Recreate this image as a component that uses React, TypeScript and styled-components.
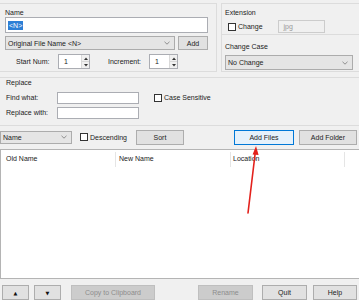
import React from "react";
import styled, { createGlobalStyle, css } from "styled-components";

const GlobalStyle = createGlobalStyle`
  html, body { margin: 0; padding: 0; background: #f0f0f0; }
  * { box-sizing: border-box; }
`;

const Window = styled.div`
  position: relative;
  width: 359px;
  height: 300px;
  overflow: hidden;
  background: #f0f0f0;
  font-family: "Liberation Sans", Arial, sans-serif;
  font-size: 7px;
  color: #222;
  display: flex;
  flex-direction: column;
`;

const TopRow = styled.div`
  display: flex;
  gap: 4px;
  padding-top: 3px;
`;

const Group = styled.div<{ $w?: number; $h: number; $edge?: boolean }>`
  width: ${({ $w }) => ($w ? `${$w}px` : "auto")};
  height: ${({ $h }) => $h}px;
  border: 1px solid #dcdcdc;
  ${({ $edge }) =>
    $edge &&
    css`
      border-left: none;
    `}
  display: flex;
  flex-direction: column;
`;

const NameGroup = styled(Group)`
  padding: 4px 0 0 5px;
`;

const RightColumn = styled.div`
  flex: 1;
  display: flex;
  flex-direction: column;
`;

const ExtGroup = styled(Group)`
  padding: 4px 0 0 3px;
  border-right: none;
`;

const CaseGroup = styled(Group)`
  margin-top: -1px;
  padding: 7px 0 0 3px;
  border-right: none;
`;

const ReplaceGroup = styled(Group)`
  margin-top: 5px;
  padding: 0 0 0 6px;
  border-right: none;
`;

const Caption = styled.div<{ $h?: number }>`
  height: ${({ $h }) => $h ?? 9}px;
  line-height: ${({ $h }) => $h ?? 9}px;
  white-space: nowrap;
`;

const Row = styled.div<{ $mt?: number; $h: number; $gap?: number }>`
  display: flex;
  align-items: center;
  margin-top: ${({ $mt }) => $mt ?? 0}px;
  height: ${({ $h }) => $h}px;
  gap: ${({ $gap }) => $gap ?? 0}px;
`;

const Label = styled.span<{ $w?: number; $ml?: number }>`
  display: inline-block;
  width: ${({ $w }) => ($w ? `${$w}px` : "auto")};
  margin-left: ${({ $ml }) => $ml ?? 0}px;
  white-space: nowrap;
`;

const TextBox = styled.div<{ $w: number; $h: number; $ml?: number; $disabled?: boolean }>`
  width: ${({ $w }) => $w}px;
  height: ${({ $h }) => $h}px;
  margin-left: ${({ $ml }) => $ml ?? 0}px;
  background: ${({ $disabled }) => ($disabled ? "#f0f0f0" : "#fff")};
  border: 1px solid ${({ $disabled }) => ($disabled ? "#cccccc" : "#abadb3")};
  color: ${({ $disabled }) => ($disabled ? "#9a9a9a" : "#222")};
  display: flex;
  align-items: center;
  padding-left: ${({ $disabled }) => ($disabled ? 5 : 2)}px;
  flex-shrink: 0;
`;

const Selected = styled.span`
  background: #2d7fd6;
  color: #fff;
  line-height: 9px;
  padding: 0 1px;
`;

const Combo = styled.div<{ $w: number; $h: number; $ml?: number }>`
  width: ${({ $w }) => $w}px;
  height: ${({ $h }) => $h}px;
  margin-left: ${({ $ml }) => $ml ?? 0}px;
  background: #e5e5e5;
  border: 1px solid #acacac;
  display: flex;
  align-items: center;
  justify-content: space-between;
  padding: 0 4px 0 2px;
  flex-shrink: 0;
  white-space: nowrap;
`;

const Button = styled.div<{
  $w: number;
  $h?: number;
  $ml?: number;
  $variant?: "default" | "focus" | "disabled";
}>`
  width: ${({ $w }) => $w}px;
  height: ${({ $h }) => $h ?? 15}px;
  margin-left: ${({ $ml }) => $ml ?? 0}px;
  flex-shrink: 0;
  display: flex;
  align-items: center;
  justify-content: center;
  background: #e1e1e1;
  border: 1px solid #adadad;
  white-space: nowrap;
  ${({ $variant }) =>
    $variant === "focus" &&
    css`
      background: #e5f1fb;
      border-color: #0078d7;
    `}
  ${({ $variant }) =>
    $variant === "disabled" &&
    css`
      background: #cccccc;
      border-color: #bfbfbf;
      color: #8d8d8d;
    `}
`;

const Check = styled.span<{ $ml?: number }>`
  width: 8px;
  height: 8px;
  margin-left: ${({ $ml }) => $ml ?? 0}px;
  margin-right: 2px;
  border: 1px solid #333;
  background: #fff;
  flex-shrink: 0;
`;

const Spin = styled.div<{ $w: number }>`
  width: ${({ $w }) => $w}px;
  height: 15px;
  border: 1px solid #abadb3;
  background: #fff;
  display: flex;
  flex-shrink: 0;
`;

const SpinValue = styled.div`
  flex: 1;
  padding-left: 5px;
  display: flex;
  align-items: center;
`;

const SpinButtons = styled.div`
  width: 8px;
  display: flex;
  flex-direction: column;
  border-left: 1px solid #d9d9d9;
`;

const SpinHalf = styled.div`
  flex: 1;
  display: flex;
  align-items: center;
  justify-content: center;
  background: #f0f0f0;
  & + & {
    border-top: 1px solid #d9d9d9;
  }
`;

const SortRow = styled.div`
  display: flex;
  align-items: center;
  height: 15px;
  margin-top: 4px;
`;

const ListView = styled.div`
  margin-top: 4px;
  height: 133px;
  background: #fff;
  border: 1px solid #b4b4b4;
  border-right: none;
`;

const ListHeader = styled.div`
  display: flex;
  height: 17px;
  align-items: flex-end;
`;

const HeaderCell = styled.div<{ $w: number; $pl: number }>`
  width: ${({ $w }) => $w}px;
  height: 15px;
  padding-left: ${({ $pl }) => $pl}px;
  border-right: 1px solid #e5e5e5;
  display: flex;
  align-items: center;
  padding-bottom: 2px;
  white-space: nowrap;
`;

const BottomBar = styled.div`
  display: flex;
  align-items: flex-start;
  padding: 6px 0 0 2px;
`;

const Tri = styled.span`
  font-family: "DejaVu Sans", sans-serif;
  font-size: 5px;
  color: #111;
`;

const ArrowLayer = styled.svg`
  position: absolute;
  left: 0;
  top: 0;
  pointer-events: none;
`;

const Chevron = () => (
  <svg width="6" height="4" viewBox="0 0 6 4">
    <polyline points="0.5,0.8 3,3.2 5.5,0.8" fill="none" stroke="#777" strokeWidth="0.8" />
  </svg>
);

const SpinArrow = ({ up }: { up?: boolean }) => (
  <svg width="4" height="3" viewBox="0 0 4 3">
    <polygon points={up ? "0,3 2,0.5 4,3" : "0,0 2,2.5 4,0"} fill="#333" />
  </svg>
);

const SpinBox = ({ w, value }: { w: number; value: string }) => (
  <Spin $w={w}>
    <SpinValue>{value}</SpinValue>
    <SpinButtons>
      <SpinHalf>
        <SpinArrow up />
      </SpinHalf>
      <SpinHalf>
        <SpinArrow />
      </SpinHalf>
    </SpinButtons>
  </Spin>
);

export default function App() {
  return (
    <Window>
      <GlobalStyle />
      <TopRow>
        <NameGroup $w={217} $h={69} $edge>
          <Caption>Name</Caption>
          <TextBox $w={203} $h={16}>
            <Selected>&lt;N&gt;</Selected>
          </TextBox>
          <Row $mt={3} $h={14} $gap={3}>
            <Combo $w={170} $h={14}>
              <span>Original File Name &lt;N&gt;</span>
              <Chevron />
            </Combo>
            <Button $w={30} $h={14}>
              Add
            </Button>
          </Row>
          <Row $mt={4} $h={15}>
            <Label $w={42} $ml={11}>
              Start Num:
            </Label>
            <SpinBox w={32} value="1" />
            <Label $w={41} $ml={18}>
              Increment:
            </Label>
            <SpinBox w={29} value="1" />
          </Row>
        </NameGroup>
        <RightColumn>
          <ExtGroup $h={32}>
            <Caption>Extension</Caption>
            <Row $mt={3} $h={13}>
              <Check $ml={3} />
              <Label>Change</Label>
              <TextBox $w={47} $h={13} $ml={15} $disabled>
                jpg
              </TextBox>
            </Row>
          </ExtGroup>
          <CaseGroup $h={38}>
            <Caption>Change Case</Caption>
            <Row $mt={4} $h={15}>
              <Combo $w={128} $h={15}>
                <span>No Change</span>
                <Chevron />
              </Combo>
            </Row>
          </CaseGroup>
        </RightColumn>
      </TopRow>

      <ReplaceGroup $h={50} $edge>
        <Caption $h={10}>Replace</Caption>
        <Row $mt={3} $h={13}>
          <Label $w={51}>Find what:</Label>
          <TextBox $w={82} $h={12} />
          <Check $ml={15} />
          <Label>Case Sensitive</Label>
        </Row>
        <Row $mt={2} $h={13}>
          <Label $w={51}>Replace with:</Label>
          <TextBox $w={82} $h={12} />
        </Row>
      </ReplaceGroup>

      <SortRow>
        <Combo $w={72} $h={13}>
          <span>Name</span>
          <Chevron />
        </Combo>
        <Check $ml={8} />
        <Label>Descending</Label>
        <Button $w={48} $ml={9}>
          Sort
        </Button>
        <Button $w={60} $ml={50} $variant="focus">
          Add Files
        </Button>
        <Button $w={58} $ml={5}>
          Add Folder
        </Button>
      </SortRow>

      <ListView>
        <ListHeader>
          <HeaderCell $w={115} $pl={5}>
            Old Name
          </HeaderCell>
          <HeaderCell $w={115} $pl={3}>
            New Name
          </HeaderCell>
          <HeaderCell $w={114} $pl={2}>
            Location
          </HeaderCell>
        </ListHeader>
      </ListView>

      <BottomBar>
        <Button $w={27}>
          <Tri>▲</Tri>
        </Button>
        <Button $w={27} $ml={5}>
          <Tri>▼</Tri>
        </Button>
        <Button $w={84} $ml={10} $variant="disabled">
          Copy to Clipboard
        </Button>
        <Button $w={55} $ml={43} $variant="disabled">
          Rename
        </Button>
        <Button $w={45} $ml={9}>
          Quit
        </Button>
        <Button $w={44} $ml={6}>
          Help
        </Button>
      </BottomBar>

      <ArrowLayer width="359" height="300" viewBox="0 0 359 300">
        <line x1="248" y1="213" x2="255.2" y2="153" stroke="#e3211c" strokeWidth="1.6" strokeLinecap="round" />
        <polygon points="256,146 252.6,154.5 258.6,155" fill="#e3211c" />
      </ArrowLayer>
    </Window>
  );
}
